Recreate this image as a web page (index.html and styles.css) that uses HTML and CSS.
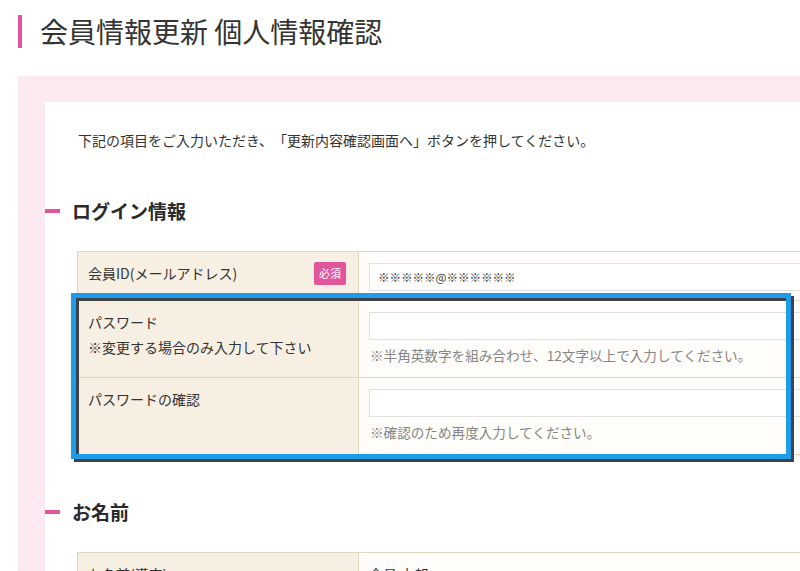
FILE: index.html
```html
<!DOCTYPE html>
<html lang="ja">
<head>
<meta charset="utf-8">
<title>会員情報更新 個人情報確認</title>
<link rel="stylesheet" href="styles.css">
</head>
<body>
<h1 class="title">会員情報更新 個人情報確認</h1>
<div class="panel">
  <div class="inner">
    <p class="intro">下記の項目をご入力いただき、「更新内容確認画面へ」ボタンを押してください。</p>

    <h2 class="section">ログイン情報</h2>
    <div class="ftable">
      <div class="row row-first">
        <div class="label label-flex"><span>会員ID(メールアドレス)</span><span class="badge">必須</span></div>
        <div class="field"><div class="input input-value">※※※※※@※※※※※※</div></div>
      </div>
      <div class="row">
        <div class="label">パスワード<br>※変更する場合のみ入力して下さい</div>
        <div class="field"><div class="input"></div><p class="hint">※半角英数字を組み合わせ、12文字以上で入力してください。</p></div>
      </div>
      <div class="row">
        <div class="label">パスワードの確認</div>
        <div class="field"><div class="input"></div><p class="hint">※確認のため再度入力してください。</p></div>
      </div>
    </div>

    <h2 class="section section-2">お名前</h2>
    <div class="ftable">
      <div class="row">
        <div class="label">お名前(漢字)</div>
        <div class="field field-text">会員 太郎</div>
      </div>
    </div>
  </div>
</div>
<div class="highlight"></div>
</body>
</html>
```
FILE: styles.css
```css
html, body {
  margin: 0;
  padding: 0;
  width: 800px;
  height: 571px;
  overflow: hidden;
  background: #ffffff;
}
body {
  position: relative;
  font-family: "Noto Sans CJK JP", "Noto Sans", sans-serif;
  color: #333333;
}
.title {
  margin: 15px 0 0 18px;
  padding-left: 18px;
  border-left: 4px solid #e2559a;
  font-size: 28px;
  font-weight: 400;
  line-height: 33px;
  height: 33px;
  color: #333;
  white-space: nowrap;
}
.panel {
  margin: 28px 0 0 18px;
  width: 920px;
  padding: 26px 0 0 27px;
  background: #fbe8f0;
  background-image: linear-gradient(135deg, rgba(255,255,255,0.08) 25%, transparent 25%, transparent 50%, rgba(255,255,255,0.08) 50%, rgba(255,255,255,0.08) 75%, transparent 75%);
  background-size: 6px 6px;
}
.inner {
  background: #ffffff;
  padding: 26px 0 40px 0;
}
.intro {
  margin: 0;
  padding-left: 33px;
  font-size: 14px;
  line-height: 24px;
  white-space: nowrap;
  text-spacing-trim: space-all;
}
.section {
  display: flex;
  align-items: center;
  gap: 12px;
  margin: 46px 0 0 0;
  font-size: 19px;
  font-weight: 700;
  line-height: 26px;
  color: #2a2a2a;
}
.section::before {
  content: "";
  width: 15px;
  height: 4px;
  background: #e2559a;
}
.section-2 {
  margin-top: 44px;
}
.ftable {
  margin: 27px 0 0 32px;
  border-top: 1px solid #e1d5bd;
  border-left: 1px solid #e1d5bd;
}
.row {
  display: grid;
  grid-template-columns: 281px 1fr;
  border-bottom: 1px solid #e1d5bd;
}
.label {
  box-sizing: border-box;
  background: #f6efe2;
  border-right: 1px solid #e1d5bd;
  padding: 9px 12px 9px 10px;
  font-size: 14px;
  line-height: 25px;
  white-space: nowrap;
}
.label-flex {
  display: flex;
  justify-content: space-between;
  align-items: flex-start;
}
.badge {
  display: block;
  margin-top: 1px;
  width: 32px;
  height: 23px;
  line-height: 23px;
  text-align: center;
  background: #e2559a;
  color: #ffffff;
  font-size: 11px;
  border-radius: 2px;
}
.field {
  background: #fffdf9;
  padding: 11px 12px 12px 10px;
}
.row-first .field {
  padding-bottom: 9px;
}
.input {
  box-sizing: border-box;
  height: 28px;
  background: #ffffff;
  border: 1px solid #e0e0e0;
}
.input-value {
  padding-left: 8px;
  font-size: 11.5px;
  line-height: 26px;
  color: #333;
}
.hint {
  margin: 5px 0 0 1px;
  font-size: 13.6px;
  line-height: 20px;
  color: #858585;
  white-space: nowrap;
}
.field-text {
  font-size: 14px;
  line-height: 25px;
  padding-top: 9px;
}
.highlight {
  position: absolute;
  left: 71px;
  top: 293px;
  width: 720px;
  height: 166px;
  box-sizing: border-box;
  border: 5px solid #1e9be9;
  box-shadow: 3px 3px 0 #3c4247, inset 3px 3px 0 #3c4247;
  pointer-events: none;
}
```
